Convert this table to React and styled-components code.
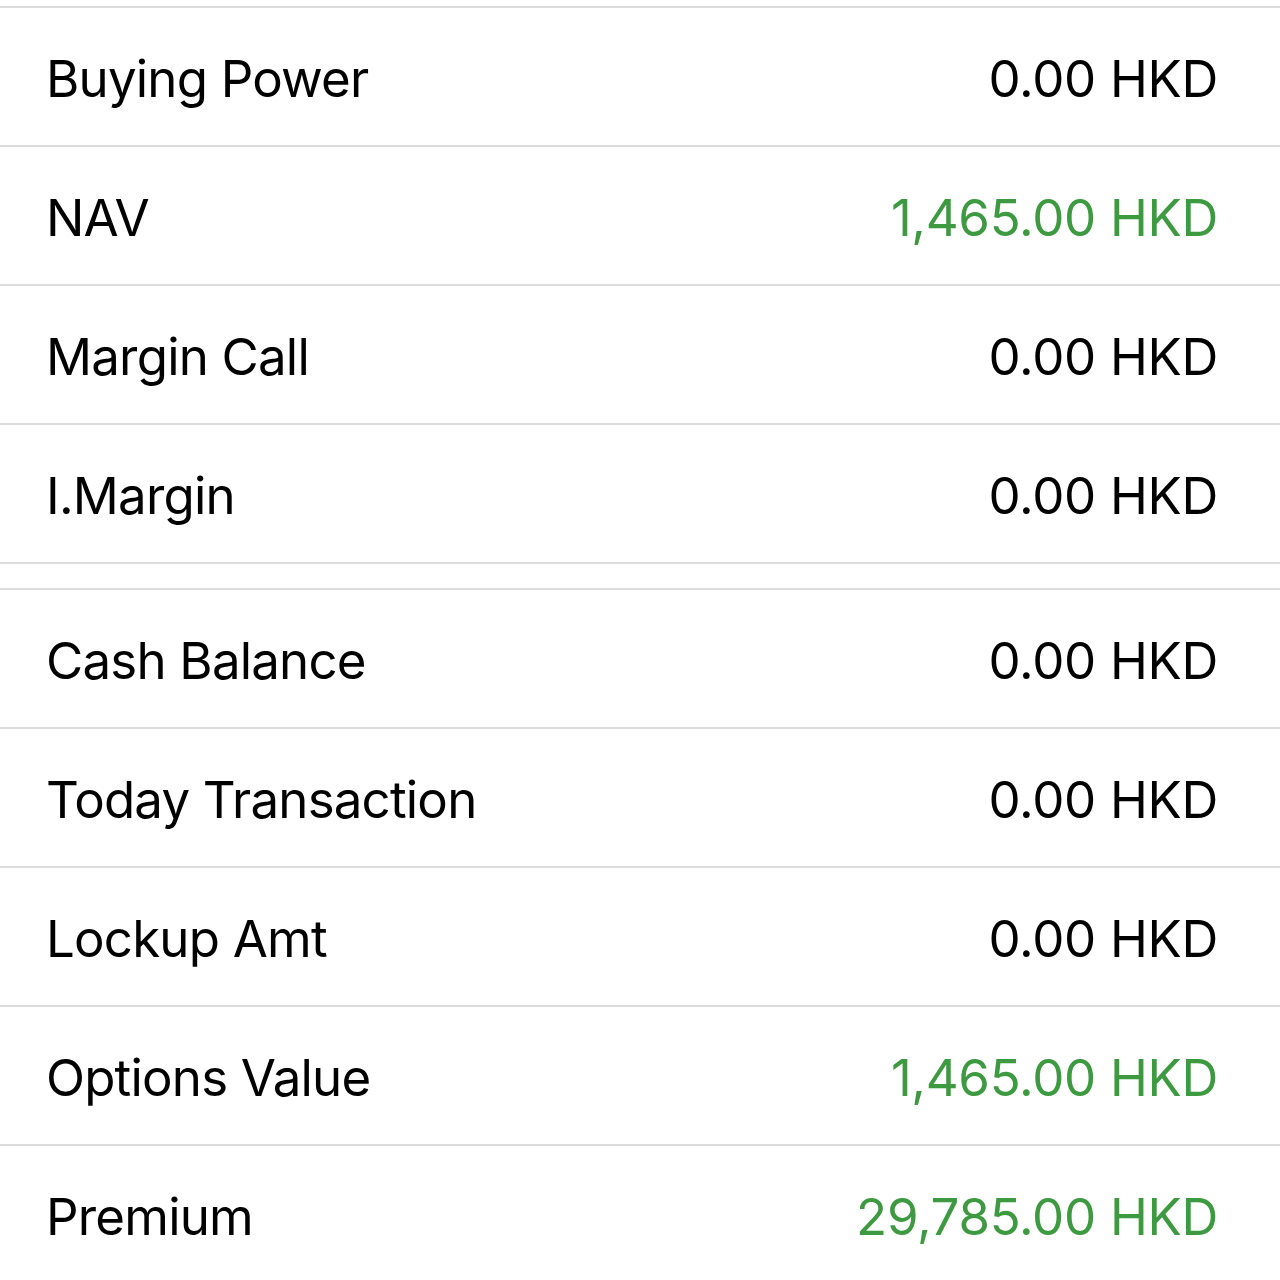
import styled, { createGlobalStyle } from "styled-components";

const GlobalStyle = createGlobalStyle`
  html, body {
    margin: 0;
    padding: 0;
    background: #ffffff;
  }
  body {
    font-family: Inter, "Noto Sans", "Liberation Sans", sans-serif;
    -webkit-font-smoothing: antialiased;
  }
`;

const sections = [
  [
    { label: "Buying Power", value: "0.00 HKD" },
    { label: "NAV", value: "1,465.00 HKD", positive: true },
    { label: "Margin Call", value: "0.00 HKD" },
    { label: "I.Margin", value: "0.00 HKD" },
  ],
  [
    { label: "Cash Balance", value: "0.00 HKD" },
    { label: "Today Transaction", value: "0.00 HKD" },
    { label: "Lockup Amt", value: "0.00 HKD" },
    { label: "Options Value", value: "1,465.00 HKD", positive: true },
    { label: "Premium", value: "29,785.00 HKD", positive: true },
  ],
];

function App() {
  return (
    <>
      <GlobalStyle />
      <Page>
        {sections.map((rows, i) => (
          <Section key={i}>
            {rows.map((row) => (
              <Row key={row.label}>
                <Label>{row.label}</Label>
                <Value $positive={row.positive}>{row.value}</Value>
              </Row>
            ))}
          </Section>
        ))}
      </Page>
    </>
  );
}

const Page = styled.div`
  display: flex;
  flex-direction: column;
  gap: 24px;
  padding-top: 6px;
  height: 1280px;
  box-sizing: border-box;
  overflow: hidden;
`;

const Section = styled.div`
  border-top: 2px solid #dcdcdc;
  display: flex;
  flex-direction: column;
`;

const Row = styled.div`
  height: 139px;
  box-sizing: border-box;
  border-bottom: 2px solid #dcdcdc;
  display: flex;
  align-items: center;
  justify-content: space-between;
  padding: 4px 62px 0 46px;
  font-size: 51px;
`;

const Label = styled.span`
  color: #000000;
  letter-spacing: -0.8px;
`;

const Value = styled.span`
  color: ${(p) => (p.$positive ? "#3d9a40" : "#000000")};
  letter-spacing: -0.3px;
`;

export default App;
